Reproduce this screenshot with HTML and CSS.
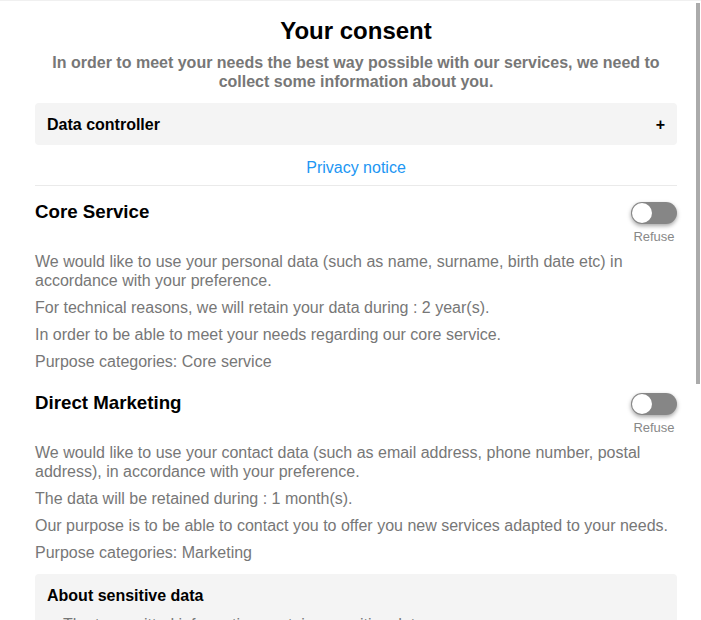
FILE: index.html
```html
<!DOCTYPE html>
<html lang="en">
<head>
<meta charset="utf-8">
<title>Your consent</title>
<link rel="stylesheet" href="styles.css">
</head>
<body>
<div class="page">
  <h2 class="title">Your consent</h2>
  <p class="lead">In order to meet your needs the best way possible with our services, we need to collect some information about you.</p>

  <div class="accordion">
    <span>Data controller</span>
    <span class="plus">+</span>
  </div>

  <a class="privacy" href="#">Privacy notice</a>
  <hr class="divider">

  <section class="purpose">
    <div class="purpose-head">
      <h3 class="purpose-title">Core Service</h3>
      <div class="switch-wrap">
        <span class="switch"><span class="knob"></span></span>
        <span class="switch-label">Refuse</span>
      </div>
    </div>
    <p class="text">We would like to use your personal data (such as name, surname, birth date etc) in accordance with your preference.</p>
    <p class="text">For technical reasons, we will retain your data during : 2 year(s).</p>
    <p class="text">In order to be able to meet your needs regarding our core service.</p>
    <p class="text">Purpose categories: Core service</p>
  </section>

  <section class="purpose">
    <div class="purpose-head">
      <h3 class="purpose-title">Direct Marketing</h3>
      <div class="switch-wrap">
        <span class="switch"><span class="knob"></span></span>
        <span class="switch-label">Refuse</span>
      </div>
    </div>
    <p class="text">We would like to use your contact data (such as email address, phone number, postal address), in accordance with your preference.</p>
    <p class="text">The data will be retained during : 1 month(s).</p>
    <p class="text">Our purpose is to be able to contact you to offer you new services adapted to your needs.</p>
    <p class="text">Purpose categories: Marketing</p>
  </section>

  <div class="sensitive">
    <h4 class="sensitive-title">About sensitive data</h4>
    <ul class="sensitive-list">
      <li>The transmitted information contains sensitive data.</li>
      <li>Sensitive data are processed with your explicit consent.</li>
    </ul>
  </div>

  <div class="actions">
    <button class="btn btn-secondary" type="button">Refuse all</button>
    <button class="btn btn-primary" type="button">Save my choices</button>
  </div>
</div>
<div class="scroll-thumb"></div>
</body>
</html>
```

FILE: styles.css
```css
body {
  margin: 0;
  background: #ffffff;
  font-family: "Liberation Sans", Arial, sans-serif;
  font-size: 16px;
  color: #000000;
  border-top: 1px solid #f0f0f0;
}

.page {
  box-sizing: border-box;
  padding: 0 24px 40px 35px;
}

.scroll-thumb {
  position: fixed;
  top: 3px;
  right: 1px;
  width: 4px;
  height: 381px;
  background: #ababab;
}

.title {
  margin: 16px 0 0;
  font-size: 24px;
  line-height: 28px;
  font-weight: bold;
  text-align: center;
  color: #000000;
}

.lead {
  margin: 8px 0 0;
  font-size: 16px;
  line-height: 19px;
  font-weight: bold;
  color: #777777;
  text-align: center;
}

.accordion {
  margin-top: 12px;
  padding: 13px 12px 11px;
  background: #f4f4f4;
  border-radius: 4px;
  display: flex;
  justify-content: space-between;
  align-items: center;
  font-weight: bold;
  line-height: 18px;
}

.plus {
  font-weight: bold;
}

.privacy {
  display: block;
  margin-top: 13px;
  line-height: 20px;
  text-align: center;
  color: #2196f3;
  text-decoration: none;
}

.divider {
  margin: 7px 0 0;
  border: 0;
  border-top: 1px solid #eaeaea;
  height: 0;
}

.purpose {
  padding-top: 15px;
}

.purpose + .purpose {
  padding-top: 21px;
}

.purpose-head {
  display: flex;
  justify-content: space-between;
  align-items: flex-start;
  margin-bottom: 1px;
}

.purpose-title {
  margin: 0;
  font-size: 18.72px;
  line-height: 22px;
  font-weight: bold;
}

.switch-wrap {
  display: flex;
  flex-direction: column;
  align-items: center;
  gap: 5px;
  margin-top: 1px;
}

.switch {
  position: relative;
  display: block;
  width: 46px;
  height: 22px;
  border-radius: 11px;
  background: #868686;
  box-shadow: 0 2px 4px rgba(0, 0, 0, 0.35);
}

.knob {
  position: absolute;
  left: 1px;
  top: 1px;
  width: 20px;
  height: 20px;
  border-radius: 50%;
  background: #ffffff;
}

.switch-label {
  font-size: 13px;
  line-height: 15px;
  color: #888888;
}

.text {
  margin: 8px 0 0;
  line-height: 19px;
  color: #777777;
}

.sensitive {
  margin-top: 12px;
  padding: 13px 12px 12px;
  background: #f4f4f4;
  border-radius: 4px;
}

.sensitive-title {
  margin: 0;
  font-size: 16px;
  line-height: 18px;
  font-weight: bold;
}

.sensitive-list {
  margin: 10px 0 0;
  padding-left: 16px;
  color: #777777;
  line-height: 19px;
}

.actions {
  display: flex;
  justify-content: center;
  gap: 16px;
  margin-top: 24px;
}

.btn {
  font-family: "Liberation Sans", Arial, sans-serif;
  font-size: 16px;
  padding: 10px 20px;
  border-radius: 4px;
  border: 1px solid #2196f3;
  cursor: pointer;
}

.btn-secondary {
  background: #ffffff;
  color: #2196f3;
}

.btn-primary {
  background: #2196f3;
  color: #ffffff;
}
```
